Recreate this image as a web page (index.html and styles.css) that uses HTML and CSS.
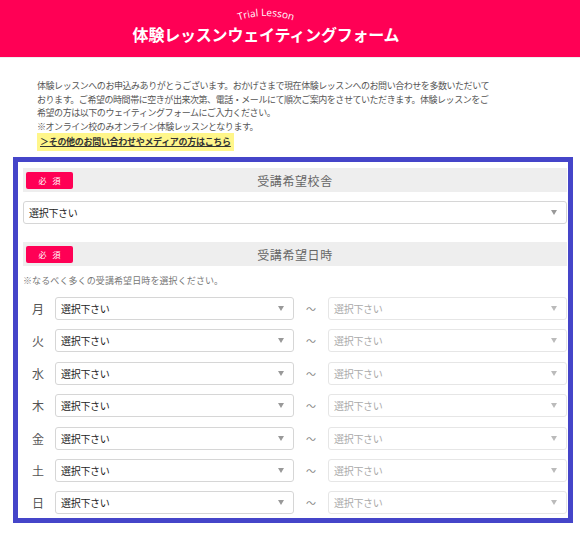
FILE: index.html
```html
<!DOCTYPE html>
<html lang="ja">
<head>
<meta charset="utf-8">
<title>体験レッスンウェイティングフォーム</title>
<link rel="stylesheet" href="styles.css">
</head>
<body>
<header class="hero">
  <div class="hero-inner">
    <svg class="sub" width="76" height="20" viewBox="0 0 76 20">
      <path id="arc" d="M4,20 Q38,6 72,20" fill="none"/>
      <text class="sub-text"><textPath href="#arc" startOffset="50%" text-anchor="middle">Trial Lesson</textPath></text>
    </svg>
    <h1 class="title">体験レッスンウェイティングフォーム</h1>
  </div>
</header>

<section class="intro">
  <p class="lead">体験レッスンへのお申込みありがとうございます。おかげさまで現在体験レッスンへのお問い合わせを多数いただいて<br>おります。ご希望の時間帯に空きが出来次第、電話・メールにて順次ご案内をさせていただきます。体験レッスンをご<br>希望の方は以下のウェイティングフォームにご入力ください。<br>※オンライン校のみオンライン体験レッスンとなります。</p>
  <a class="link" href="#">＞その他のお問い合わせやメディアの方はこちら</a>
</section>

<form class="box">
  <div class="bar"><span class="badge">必須</span><span class="bar-label">受講希望校舎</span></div>
  <div class="select school"><span>選択下さい</span><i class="arrow"></i></div>

  <div class="bar bar2"><span class="badge">必須</span><span class="bar-label">受講希望日時</span></div>
  <p class="note">※なるべく多くの受講希望日時を選択ください。</p>

  <div class="rows">
    <div class="row"><span class="day">月</span><div class="select"><span>選択下さい</span><i class="arrow"></i></div><span class="tilde">～</span><div class="select dim"><span>選択下さい</span><i class="arrow"></i></div></div>
    <div class="row"><span class="day">火</span><div class="select"><span>選択下さい</span><i class="arrow"></i></div><span class="tilde">～</span><div class="select dim"><span>選択下さい</span><i class="arrow"></i></div></div>
    <div class="row"><span class="day">水</span><div class="select"><span>選択下さい</span><i class="arrow"></i></div><span class="tilde">～</span><div class="select dim"><span>選択下さい</span><i class="arrow"></i></div></div>
    <div class="row"><span class="day">木</span><div class="select"><span>選択下さい</span><i class="arrow"></i></div><span class="tilde">～</span><div class="select dim"><span>選択下さい</span><i class="arrow"></i></div></div>
    <div class="row"><span class="day">金</span><div class="select"><span>選択下さい</span><i class="arrow"></i></div><span class="tilde">～</span><div class="select dim"><span>選択下さい</span><i class="arrow"></i></div></div>
    <div class="row"><span class="day">土</span><div class="select"><span>選択下さい</span><i class="arrow"></i></div><span class="tilde">～</span><div class="select dim"><span>選択下さい</span><i class="arrow"></i></div></div>
    <div class="row"><span class="day">日</span><div class="select"><span>選択下さい</span><i class="arrow"></i></div><span class="tilde">～</span><div class="select dim"><span>選択下さい</span><i class="arrow"></i></div></div>
  </div>
</form>
</body>
</html>
```

FILE: styles.css
```css
html, body {
  margin: 0;
  padding: 0;
  background: #fff;
}
body {
  font-family: "Noto Sans CJK JP", "Noto Sans", sans-serif;
  color: #333;
}

.hero {
  background: #ff0055;
  height: 57px;
  border-bottom: 1px solid #eeeeee;
  box-sizing: content-box;
}
.hero-inner {
  display: flex;
  flex-direction: column;
  align-items: center;
  padding-right: 48px;
  padding-top: 3px;
}
.sub {
  display: block;
}
.sub-text {
  font-family: "Open Sans", "Liberation Sans", sans-serif;
  font-size: 10px;
  fill: #ffffff;
}
.title {
  margin: 0;
  font-size: 16px;
  line-height: 22px;
  font-weight: bold;
  color: #fff;
  letter-spacing: -0.2px;
}

.intro {
  padding: 21px 0 0 37px;
  display: flex;
  flex-direction: column;
  align-items: flex-start;
}
.lead {
  margin: 0;
  font-size: 9px;
  line-height: 13.5px;
  letter-spacing: -0.45px;
  color: #555;
  white-space: nowrap;
}
.link {
  display: block;
  padding: 2px 3px;
  background: #fff68a;
  color: #333;
  font-size: 9px;
  line-height: 14px;
  font-weight: bold;
  letter-spacing: -0.3px;
  text-decoration: underline;
}

.box {
  margin: 6px 0 0 13px;
  width: 560px;
  box-sizing: border-box;
  border: 5px solid #4545c9;
  padding: 6px 1px 4px 5px;
  display: flex;
  flex-direction: column;
}

.bar {
  background: #eeeeee;
  height: 24px;
  display: flex;
  align-items: center;
  padding: 0 50px 0 3px;
}
.bar2 {
  margin-top: 18px;
}
.badge {
  width: 47px;
  height: 17px;
  background: #ff0055;
  border-radius: 2px;
  color: #fff;
  font-size: 8px;
  line-height: 17px;
  text-align: center;
  letter-spacing: 6px;
  text-indent: 6px;
}
.bar-label {
  flex: 1;
  text-align: center;
  font-size: 12px;
  color: #666;
  letter-spacing: 0.6px;
}

.select {
  height: 23px;
  box-sizing: border-box;
  border: 1px solid #d6d6d6;
  border-radius: 3px;
  background: #fff;
  display: flex;
  align-items: center;
  justify-content: space-between;
  padding: 0 9px 0 5px;
  font-size: 10px;
  color: #222;
  letter-spacing: -0.3px;
}
.school {
  margin-top: 9px;
}
.select.dim {
  border-color: #e6e6e6;
  color: #aaa;
}
.arrow {
  width: 0;
  height: 0;
  border-left: 3px solid transparent;
  border-right: 3px solid transparent;
  border-top: 5px solid #999;
}
.select.dim .arrow {
  border-top-color: #bbb;
}

.note {
  margin: 9px 0 0 0;
  font-size: 9px;
  line-height: 12px;
  color: #777;
  letter-spacing: 0.1px;
}

.rows {
  margin-top: 10px;
  display: flex;
  flex-direction: column;
  gap: 9.4px;
}
.row {
  display: grid;
  grid-template-columns: 32px 1fr 34px 1fr;
  align-items: center;
}
.day {
  text-align: center;
  font-size: 12px;
  color: #555;
  padding-right: 2px;
}
.tilde {
  text-align: center;
  font-size: 10px;
  color: #888;
}
```
